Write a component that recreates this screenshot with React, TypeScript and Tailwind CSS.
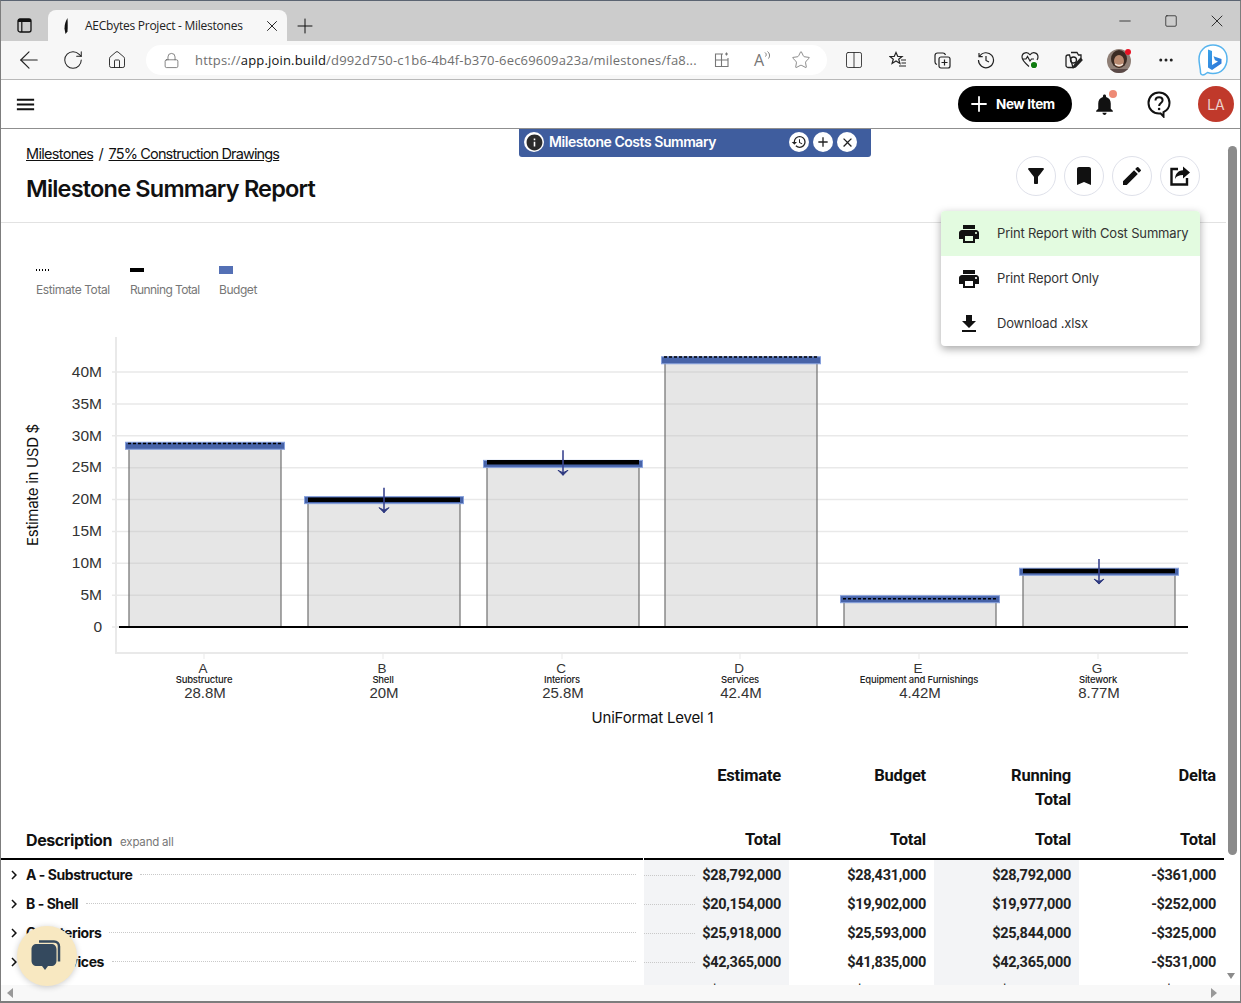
import React from "react";
import { MdPrint, MdFileDownload, MdFilterAlt, MdBookmark, MdEdit, MdHistory, MdInfo, MdAdd, MdClose, MdNotifications, MdMenu, MdChevronRight } from "react-icons/md";
import { ArrowLeft, RotateCw, Home, Lock, Star, Plus, X, Minus, Square, Columns2, MoreHorizontal } from "lucide-react";

const S = "Inter, 'Liberation Sans', sans-serif";

const Tb = ({ children, w = "w-[44px]" }: { children: React.ReactNode; w?: string }) => (
  <div className={`${w} h-[30px] flex items-center justify-center shrink-0 text-[#222]`}>{children}</div>
);

const Avatar = () => (
  <svg width="26" height="26" viewBox="0 0 26 26">
    <defs><clipPath id="av"><circle cx="12" cy="14" r="12" /></clipPath></defs>
    <g clipPath="url(#av)">
      <rect width="26" height="26" fill="#8f7f76" />
      <ellipse cx="12" cy="12" rx="8" ry="9" fill="#3a2a22" />
      <ellipse cx="12" cy="14" rx="5" ry="6" fill="#b98a70" />
      <path d="M8 17q4 3 8 0" stroke="#f3e6dc" strokeWidth="1.4" fill="none" />
      <rect x="2" y="22" width="20" height="6" fill="#5b4a48" />
    </g>
    <circle cx="21" cy="5" r="3" fill="#e81123" />
  </svg>
);

const Bing = () => (
  <svg width="32" height="34" viewBox="0 0 32 34">
    <defs>
      <linearGradient id="bg" x1="0" y1="0" x2="1" y2="1">
        <stop offset="0" stopColor="#39a3e8" />
        <stop offset="1" stopColor="#2c6fd6" />
      </linearGradient>
    </defs>
    <path d="M16 2C8 2 2 8 2 16c0 5 1.500 9 1.500 13.500 0 2 2 3 4 2l3-2c2 .8 3.500 1 5.500 1 8 0 14-6 14-14.500S24 2 16 2z" fill="#fff" stroke="#57b4ee" strokeWidth="1.500" />
    <path d="M11 6.500l4 1.500v14l6-3.500-3-1.200-1.500-4 8 2.700v4.500L15 27l-4-2.500z" fill="url(#bg)" />
  </svg>
);

const HelpIcon = () => (
  <svg width="26" height="28" viewBox="0 0 26 28">
    <path d="M13 2.500C7 2.500 2.500 7 2.500 13S7 23.500 13 23.500c.6 0 1 0 1.500-.1l3 3.100v-4.300c3.600-1.800 6-5 6-9.200C23.500 7 19 2.500 13 2.500z" fill="none" stroke="#111" strokeWidth="2" />
    <path d="M9.500 10.500c0-2 1.600-3.300 3.600-3.300s3.500 1.300 3.500 3.100c0 2.700-3.500 2.700-3.500 5.700" fill="none" stroke="#111" strokeWidth="2" />
    <circle cx="13.100" cy="19" r="1.300" fill="#111" />
  </svg>
);

const ShareIcon = () => (
  <svg width="22" height="22" viewBox="0 0 22 22">
    <path d="M9 4H2.500v15.500H18V13" fill="none" stroke="#111" strokeWidth="2.400" />
    <path d="M14 1.500l7 6-7 6V10c-4 0-6.500 1-8 4 .3-5 3-8.300 8-8.700z" fill="#111" />
  </svg>
);

const CircleBtn = ({ children }: { children: React.ReactNode }) => (
  <div className="w-[40px] h-[40px] rounded-full border border-[#dfe1ea] bg-white flex items-center justify-center">{children}</div>
);

const Chat = () => (
  <svg width="34" height="32" viewBox="0 0 34 32">
    <path d="M9 1.500h15c3 0 5 2 5 5v15" fill="none" stroke="#34495e" strokeWidth="2.500" />
    <path d="M7 4h14c3.500 0 5.500 2 5.500 5.500v11c0 3.500-2 5.500-5.500 5.500h-3l-3 4-3-4H7c-3.500 0-5.500-2-5.500-5.500v-11C1.500 6 3.500 4 7 4z" fill="#34495e" />
  </svg>
);

type Bar = { x: number; letter: string; name: string; val: string; est: number; bud: number; run: number; arrow?: boolean };
const bars: Bar[] = [
  { x: 129, letter: "A", name: "Substructure", val: "28.8M", est: 28.79, bud: 28.43, run: 28.79 },
  { x: 308, letter: "B", name: "Shell", val: "20M", est: 20.15, bud: 19.9, run: 19.98, arrow: true },
  { x: 487, letter: "C", name: "Interiors", val: "25.8M", est: 25.92, bud: 25.59, run: 25.84, arrow: true },
  { x: 665, letter: "D", name: "Services", val: "42.4M", est: 42.37, bud: 41.84, run: 42.37 },
  { x: 844, letter: "E", name: "Equipment and Furnishings", val: "4.42M", est: 4.42, bud: 4.36, run: 4.42 },
  { x: 1023, letter: "G", name: "Sitework", val: "8.77M", est: 8.94, bud: 8.67, run: 8.77, arrow: true },
];
const Y = (m: number) => 627 - m * 6.375;
const ticks = [40, 35, 30, 25, 20, 15, 10, 5];

const Chart = () => (
  <svg width="1225" height="400" viewBox="1 330 1225 400" className="block shrink-0">
    <g stroke="#e9e9e9" strokeWidth="1.500">
      {ticks.map((t) => (
        <line key={t} x1="112" x2="1188" y1={Y(t)} y2={Y(t)} />
      ))}
      <line x1="112" x2="119" y1="627" y2="627" />
      <line x1="116" x2="116" y1="337" y2="653" strokeWidth="2" />
      <line x1="115" x2="1188" y1="653" y2="653" strokeWidth="2" />
      {bars.map((b) => (
        <line key={b.x} x1={b.x + 75} x2={b.x + 75} y1="653" y2="659" strokeWidth="1" />
      ))}
    </g>
    <g fontFamily="'Liberation Sans', sans-serif" fontSize="15.500" fill="#333" textAnchor="end">
      {ticks.map((t) => (
        <text key={t} x="102" y={Y(t) + 4.8}>{t}M</text>
      ))}
      <text x="102" y="632">0</text>
    </g>
    <text transform="translate(38 485) rotate(-90)" textAnchor="middle" fontFamily={S} fontSize="15" letterSpacing="-0.3" fill="#111">Estimate in USD $</text>
    {bars.map((b) => (
      <g key={b.letter}>
        <rect x={b.x} y={Y(b.run)} width="152" height={627 - Y(b.run)} fill="#bdbdbd" fillOpacity=".38" stroke="#707070" strokeWidth="1.200" />
        <rect x={b.x - 3.500} y={Y(b.bud) - 3.500} width="159" height="7" fill="#4763a8" stroke="#86a0dc" strokeWidth="1" />
        {b.arrow ? (
          <>
            <line x1={b.x} x2={b.x + 152} y1={Y(b.run)} y2={Y(b.run)} stroke="#000" strokeWidth="4.500" />
            <line x1={b.x + 76} x2={b.x + 76} y1={Y(b.run) - 12} y2={Y(b.run) + 13} stroke="#3a4490" strokeWidth="1.600" />
            <path d={`M${b.x + 71} ${Y(b.run) + 8}l5 5 5-5-5 2.500z`} fill="#2f3a80" stroke="#2f3a80" strokeWidth="1" />
          </>
        ) : (
          <line x1={b.x - 1} x2={b.x + 153} y1={Y(b.est)} y2={Y(b.est)} stroke="#000" strokeWidth="1.500" strokeDasharray="3 2" />
        )}
        <text x={b.x + 74} y="673" textAnchor="middle" fontFamily="'Liberation Sans', sans-serif" fontSize="13.500" fill="#333">{b.letter}</text>
        <text x={b.x + 75} y="683" textAnchor="middle" fontFamily={S} fontSize="9.500" fontWeight="500" letterSpacing="-0.2" fill="#222">{b.name}</text>
        <text x={b.x + 76} y="698" textAnchor="middle" fontFamily="'Liberation Sans', sans-serif" fontSize="15" fill="#333">{b.val}</text>
      </g>
    ))}
    <line x1="119" x2="1188" y1="627" y2="627" stroke="#000" strokeWidth="2" />
    <text x="652.500" y="723" textAnchor="middle" fontFamily={S} fontSize="15" letterSpacing="-0.2" fill="#111">UniFormat Level 1</text>
  </svg>
);

const rows = [
  ["A - Substructure", "$28,792,000", "$28,431,000", "$28,792,000", "-$361,000"],
  ["B - Shell", "$20,154,000", "$19,902,000", "$19,977,000", "-$252,000"],
  ["C - Interiors", "$25,918,000", "$25,593,000", "$25,844,000", "-$325,000"],
  ["D - Services", "$42,365,000", "$41,835,000", "$42,365,000", "-$531,000"],
  ["E - Equipment and Furnishings", "$4,420,000", "$4,364,000", "$4,420,000", "-$57,000"],
];

const grid = "grid grid-cols-[643px_145px_145px_145px_145px]";
const H = ({ children }: { children?: React.ReactNode }) => (
  <div className="pr-[8px] pt-[1px] text-right text-[16.500px] leading-[24px] font-bold tracking-[-0.2px] text-[#111] font-['Roboto','Liberation_Sans',sans-serif]">{children}</div>
);
const num = "pt-[2px] font-['Roboto','Liberation_Sans',sans-serif] text-[14.500px] font-bold tracking-[-0.3px] text-[#222]";

const MenuItem = ({ icon, label, active }: { icon: React.ReactNode; label: string; active?: boolean }) => (
  <div className={`h-[45px] flex items-center ${active ? "bg-[#e3fbe0]" : ""}`}>
    <div className="w-[56px] flex justify-center text-[#111]">{icon}</div>
    <span className="text-[13px] tracking-[-0.17px] text-[#333]">{label}</span>
  </div>
);

export default function App() {
  return (
    <div className="w-[1241px] h-[1003px] flex flex-col overflow-hidden bg-white border-t border-l border-r border-b-2 border-t-[#5b6472] border-l-[#7d7d7d] border-r-[#7d7d7d] border-b-[#7d7d7d] font-['Inter','Liberation_Sans',sans-serif]">
      {/* tab strip */}
      <div className="h-[40px] shrink-0 bg-[#cccccc] flex items-end">
        <div className="w-[47px] h-[31px] flex items-center justify-center">
          <svg width="15" height="15" viewBox="0 0 15 15">
            <rect x="1" y="1" width="13" height="13" rx="2" fill="none" stroke="#111" strokeWidth="1.300" />
            <rect x="1" y="1" width="13" height="3" fill="#111" />
            <rect x="4.200" y="1" width="1.200" height="13" fill="#111" />
          </svg>
        </div>
        <div className="w-[239px] h-[31px] bg-[#f7f7f7] rounded-t-lg flex items-center">
          <svg className="ml-[14px]" width="8" height="18" viewBox="0 0 8 18">
            <path d="M5.500 1C3.500 4 2.500 8 2.500 11.500l1 5.500 2-2.500c.3-4 .3-9 0-13.500z" fill="#111" />
          </svg>
          <span className="ml-[15px] text-[12px] leading-none text-[#222] font-['Open_Sans',sans-serif] tracking-[-0.25px] whitespace-nowrap">AECbytes Project - Milestones</span>
          <X className="ml-auto mr-[6px]" size={18} strokeWidth={1.200} color="#111" />
        </div>
        <div className="w-[36px] h-[31px] flex items-center justify-center">
          <Plus size={24} strokeWidth={1} color="#111" />
        </div>
        <div className="flex-1" />
        <div className="self-start flex items-center mt-[10px] h-[20px] text-[#111]">
          <div className="w-[46px] flex justify-center"><Minus size={18} strokeWidth={1} /></div>
          <div className="w-[46px] flex justify-center"><Square size={14} strokeWidth={1.200} /></div>
          <div className="w-[46px] flex justify-center"><X size={20} strokeWidth={1} /></div>
        </div>
      </div>
      {/* toolbar */}
      <div className="h-[39px] shrink-0 bg-[#f7f7f7] border-b border-[#b9b9b9] flex items-center pl-[6px]">
        <Tb><ArrowLeft size={28} strokeWidth={1} /></Tb>
        <Tb><RotateCw size={22} strokeWidth={1.100} /></Tb>
        <Tb><Home size={20} strokeWidth={1.100} /></Tb>
        <div className="ml-[7px] w-[681px] h-[30px] bg-white rounded-full flex items-center shrink-0">
          <Lock className="ml-[17px]" size={17} strokeWidth={1} color="#555" />
          <span className="ml-[15px] w-[503px] text-[13px] leading-none whitespace-nowrap font-['Open_Sans',sans-serif] tracking-[0.18px] text-[#6f6f6f]">
            https://<span className="text-[#111]">app.join.build</span>/d992d750-c1b6-4b4f-b370-6ec69609a23a/milestones/fa8...
          </span>
          <svg className="ml-[16px]" width="16" height="16" viewBox="0 0 16 16" fill="none" stroke="#777" strokeWidth="1.100">
            <path d="M11 2h3M12.500 .5v3M9 2H1.500v12.500H14V6M7.500 2v12.500M1.500 8H14" />
          </svg>
          <span className="ml-[24px] text-[16px] leading-none text-[#777] font-['Open_Sans',sans-serif]">A</span>
          <svg width="7" height="10" viewBox="0 0 7 10" fill="none" stroke="#777" strokeWidth="1" className="mb-[8px]">
            <path d="M1 1.500c1.500 1 1.500 3 .5 4M3.500 .5c2.500 2 2.500 5 1 7" />
          </svg>
          <Star className="ml-[20px]" size={20} strokeWidth={0.900} color="#666" />
        </div>
        <Tb w="w-[44px] ml-[5px]"><Columns2 size={20} strokeWidth={1} /></Tb>
        <Tb>
          <svg width="18" height="18" viewBox="0 0 18 18" fill="none" stroke="#222" strokeWidth="1.200">
            <path d="M7 1.500l1.800 4h4.200l-3.300 2.700 1.200 4.300L7 10l-3.900 2.500 1.200-4.300L1 5.500h4.200z" />
            <path d="M12 9h5M12.500 12h4.500M10 15h7" />
          </svg>
        </Tb>
        <Tb>
          <svg width="18" height="18" viewBox="0 0 18 18" fill="none" stroke="#222" strokeWidth="1.200">
            <rect x="6" y="6" width="11" height="11" rx="2" />
            <path d="M11.500 8.500v6M8.500 11.500h6M4 13.500C2.500 13 2 12 2 11V4.500C2 3 3 2 4.500 2H10c1 0 2 .5 2.500 2" />
          </svg>
        </Tb>
        <Tb>
          <svg width="18" height="18" viewBox="0 0 18 18" fill="none" stroke="#222" strokeWidth="1.200">
            <path d="M2.500 5.500A7.500 7.500 0 1 1 1.500 9M2 2v3.700h3.700M9 5v4.500l3 1.500" />
          </svg>
        </Tb>
        <Tb>
          <svg width="20" height="20" viewBox="0 0 20 20" fill="none" stroke="#222" strokeWidth="1.200">
            <path d="M10 5C8 1.500 2 2 2 7c0 3.500 3.500 6.500 7 9.500M10 5c2-3.500 8-3 8 2 0 1-.3 2-1 3M2.500 9H6l1.500-2.500L10 11l1.500-2H14" />
            <circle cx="14" cy="15" r="3.700" fill="#107c10" stroke="#fff" />
          </svg>
        </Tb>
        <Tb>
          <svg width="20" height="20" viewBox="0 0 20 20" fill="none" stroke="#222" strokeWidth="1.300">
            <path d="M7 2.500h6l1.500 2.500h2.500v5M9 17.500H4C3 17.500 2 16.500 2 15.500V7c0-1 1-2 2-2h1.500z" />
            <circle cx="9.500" cy="10" r="3" />
            <path d="M18 10l-6.500 7-2 .5.500-2 6.500-7z" fill="#222" />
          </svg>
        </Tb>
        <Tb w="w-[48px]"><Avatar /></Tb>
        <Tb w="w-[44px]"><MoreHorizontal size={18} strokeWidth={2} /></Tb>
        <Tb w="w-[49px]"><Bing /></Tb>
      </div>
      {/* app header */}
      <div className="h-[49px] shrink-0 bg-white border-b border-[#8f8f8f] flex items-center pl-[13px]">
        <MdMenu size={23} color="#111" />
        <div className="ml-auto w-[114px] h-[36px] rounded-full bg-black text-white flex items-center pl-[9px] gap-[5px]">
          <Plus size={24} strokeWidth={1.800} />
          <span className="text-[13.500px] font-bold tracking-[-0.4px]">New Item</span>
        </div>
        <div className="relative w-[64px] flex justify-center">
          <MdNotifications size={25} color="#111" />
          <div className="absolute left-[37px] top-[-2px] w-[8px] h-[8px] rounded-full bg-[#ee8a75]" />
        </div>
        <div className="w-[46px] flex justify-center"><HelpIcon /></div>
        <div className="ml-[16px] mr-[6px] w-[36px] h-[36px] rounded-full bg-[#c0392b] text-[#ecd0cc] flex items-center justify-center text-[14px]">LA</div>
      </div>
      {/* content */}
      <div className="flex-1 min-h-0 flex relative">
        <div className="w-[1225px] shrink-0 overflow-hidden">
          <div className="h-[94px] border-b border-[#e2e2e2] pl-[25px] pt-[16px]">
            <div className="text-[14.500px] leading-[18px] tracking-[-0.7px] text-[#111]">
              <span className="underline">Milestones</span> <span className="mx-[2px]">/</span> <span className="underline tracking-[-0.85px]">75% Construction Drawings</span>
            </div>
            <div className="mt-[11px] text-[23.500px] leading-[30px] font-semibold tracking-[-0.8px] text-[#111]">Milestone Summary Report</div>
          </div>
          <div className="h-[107px] pl-[35px] pt-[43px] flex">
            <div className="w-[94px]">
              <div className="h-[8px] flex items-center"><div className="w-[14px] h-[2px] bg-[repeating-linear-gradient(90deg,#000_0_1px,transparent_1px_3px)]" /></div>
              <div className="mt-[8px] text-[12px] leading-[16px] tracking-[-0.4px] text-[#777]">Estimate Total</div>
            </div>
            <div className="w-[89px]">
              <div className="h-[8px] flex items-center"><div className="w-[14px] h-[4px] bg-black" /></div>
              <div className="mt-[8px] text-[12px] leading-[16px] tracking-[-0.6px] text-[#777]">Running Total</div>
            </div>
            <div>
              <div className="w-[14px] h-[8px] bg-[#5470b5]" />
              <div className="mt-[8px] text-[12px] leading-[16px] tracking-[-0.45px] text-[#777]">Budget</div>
            </div>
          </div>
          <Chart />
          <div className={`${grid} pt-[33px]`}>
            <div />
            <H>Estimate</H>
            <H>Budget</H>
            <H>Running<br />Total</H>
            <H>Delta</H>
          </div>
          <div className={`${grid} mt-[15px] h-[33px]`}>
            <div className="pl-[25px] pt-[1px] flex items-baseline gap-[8px] border-b-2 border-black mr-[1px] h-[33px]">
              <span className="text-[16px] leading-[24px] font-bold tracking-[-0.4px] text-[#111]">Description</span>
              <span className="text-[11.500px] leading-[24px] tracking-[-0.2px] text-[#777]">expand all</span>
            </div>
            {[0, 1, 2, 3].map((i) => (
              <div key={i} className="border-b-2 border-black h-[33px]"><H>Total</H></div>
            ))}
          </div>
          {rows.map((r) => (
            <div key={r[0]} className={`${grid} h-[29px]`}>
              <div className="flex items-center pr-[8px] min-w-0">
                <MdChevronRight className="ml-[4px] w-[18px] shrink-0" size={18} color="#111" />
                <span className="ml-[3px] text-[14px] font-bold tracking-[-0.45px] text-[#111] whitespace-nowrap">{r[0]}</span>
                <div className="flex-1 ml-[8px] border-t border-dotted border-[#c9c9c9]" />
              </div>
              <div className={`flex items-center pr-[8px] bg-[#f3f4f6] ${num}`}>
                <div className="flex-1 mr-[7px] border-t border-dotted border-[#c9c9c9]" />
                {r[1]}
              </div>
              <div className={`flex items-center justify-end pr-[8px] ${num}`}>{r[2]}</div>
              <div className={`flex items-center justify-end pr-[8px] bg-[#f3f4f6] ${num}`}>{r[3]}</div>
              <div className={`flex items-center justify-end pr-[8px] ${num}`}>{r[4]}</div>
            </div>
          ))}
        </div>
        {/* vertical scrollbar */}
        <div className="w-[14px] shrink-0 bg-white relative">
          <div className="mt-[17px] ml-[2px] w-[9px] h-[709px] rounded-full bg-[#8b8b8b]" />
          <svg className="absolute left-0 top-[843px]" width="10" height="8" viewBox="0 0 10 8"><path d="M1 1h8L5 7z" fill="#8b8b8b" /></svg>
        </div>
        {/* overlays */}
        <div className="absolute left-[518px] top-0 w-[352px] h-[28px] pb-[2px] bg-[#3f5d9e] rounded-b-[3px] flex items-center text-white">
          <div className="ml-[5px] w-[20px] h-[20px] rounded-full bg-white flex items-center justify-center"><MdInfo size={19} color="#2b2b2b" /></div>
          <span className="ml-[5px] mb-[2px] text-[14px] font-semibold tracking-[-0.45px]">Milestone Costs Summary</span>
          <div className="ml-auto mr-[14px] flex gap-[4px]">
            <div className="w-[20px] h-[20px] rounded-full bg-white flex items-center justify-center"><MdHistory size={16} color="#222" /></div>
            <div className="w-[20px] h-[20px] rounded-full bg-white flex items-center justify-center"><MdAdd size={16} color="#222" /></div>
            <div className="w-[20px] h-[20px] rounded-full bg-white flex items-center justify-center"><MdClose size={15} color="#222" /></div>
          </div>
        </div>
        <div className="absolute left-[1015px] top-[27px] flex gap-[8px]">
          <CircleBtn><MdFilterAlt size={24} color="#111" /></CircleBtn>
          <CircleBtn><MdBookmark size={24} color="#111" /></CircleBtn>
          <CircleBtn><MdEdit size={24} color="#111" /></CircleBtn>
          <CircleBtn><ShareIcon /></CircleBtn>
        </div>
        <div className="absolute left-[940px] top-[82px] w-[259px] h-[135px] bg-white rounded-[4px] overflow-hidden shadow-[0_3px_8px_rgba(0,0,0,0.35)]">
          <MenuItem active icon={<MdPrint size={24} />} label="Print Report with Cost Summary" />
          <MenuItem icon={<MdPrint size={24} />} label="Print Report Only" />
          <MenuItem icon={<MdFileDownload size={24} />} label="Download .xlsx" />
        </div>
        <div className="absolute left-[16px] top-[797px] w-[60px] h-[60px] rounded-full bg-[#f8e8c1] shadow-[0_1px_6px_rgba(0,0,0,0.2)] flex items-center justify-center">
          <Chat />
        </div>
      </div>
      {/* horizontal scrollbar */}
      <div className="h-[16px] shrink-0 bg-[#f8f8f8] flex items-center justify-between pl-[5px] pr-[22px]">
        <svg width="8" height="10" viewBox="0 0 8 10"><path d="M7 0v10L1 5z" fill="#999" /></svg>
        <svg width="8" height="10" viewBox="0 0 8 10"><path d="M1 0v10l6-5z" fill="#999" /></svg>
      </div>
    </div>
  );
}
